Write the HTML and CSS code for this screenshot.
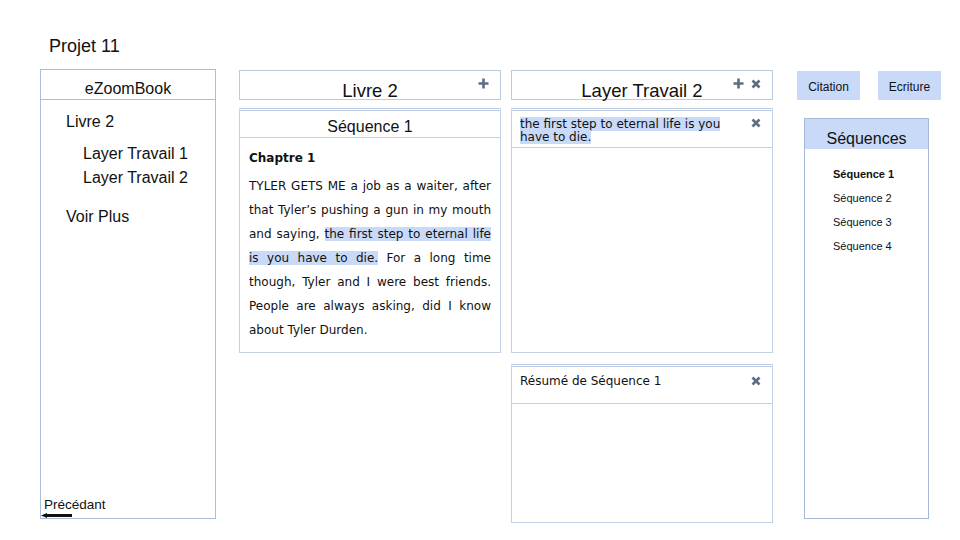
FILE: index.html
```html
<!DOCTYPE html>
<html lang="fr">
<head>
<meta charset="utf-8">
<title>Projet 11</title>
<link rel="stylesheet" href="styles.css">
</head>
<body>
<div class="page">
  <h1 class="title">Projet 11</h1>
  <div class="main">
    <aside class="nav">
      <div class="nav-head">eZoomBook</div>
      <ul class="nav-list">
        <li class="nav-book">Livre 2</li>
        <li class="nav-layer nav-layer-first">Layer Travail 1</li>
        <li class="nav-layer">Layer Travail 2</li>
        <li class="nav-more">Voir Plus</li>
      </ul>
      <div class="nav-foot">
        <span class="nav-back">Précédant</span>
        <svg class="back-arrow" width="31" height="5" viewBox="0 0 31 5"><polygon points="0,2.5 6,0 6,5" fill="#111"/><rect x="4" y="1" width="27" height="3" fill="#111"/></svg>
      </div>
    </aside>

    <section class="col col-book">
      <div class="bar">
        <span class="bar-title">Livre 2</span>
        <div class="bar-icons">
          <svg class="ico" width="11" height="11" viewBox="0 0 11 11"><path d="M5.5 0.5V10.5M0.5 5.5H10.5" stroke="#5d6d84" stroke-width="2.6"/></svg>
        </div>
      </div>
      <div class="card seq-card">
        <div class="card-head center">Séquence 1</div>
        <div class="seq-body">
          <div class="chapter">Chaptre 1</div>
          <p class="seq-text">TYLER GETS ME a job as a waiter, after that Tyler’s pushing a gun in my mouth and saying, <mark class="hl">the first step to eternal life</mark> <mark class="hl">is you have to die.</mark> For a long time though, Tyler and I were best friends. People are always asking, did I know about Tyler Durden.</p>
        </div>
      </div>
    </section>

    <section class="col col-layer">
      <div class="bar">
        <span class="bar-title">Layer Travail 2</span>
        <div class="bar-icons">
          <svg class="ico" width="11" height="11" viewBox="0 0 11 11"><path d="M5.5 0.5V10.5M0.5 5.5H10.5" stroke="#5d6d84" stroke-width="2.6"/></svg>
          <svg class="ico" width="10" height="10" viewBox="0 0 10 10"><path d="M1.5 1.5L8.5 8.5M8.5 1.5L1.5 8.5" stroke="#5d6d84" stroke-width="2.6"/></svg>
        </div>
      </div>
      <div class="card quote-card">
        <div class="quote-head">
          <p class="quote-text"><mark class="hl">the first step to eternal life is you have to die.</mark></p>
          <svg class="ico close" width="10" height="10" viewBox="0 0 10 10"><path d="M1.5 1.5L8.5 8.5M8.5 1.5L1.5 8.5" stroke="#5d6d84" stroke-width="2.6"/></svg>
        </div>
      </div>
      <div class="card resume-card">
        <div class="resume-head">
          <span class="resume-title">Résumé de Séquence 1</span>
          <svg class="ico close" width="10" height="10" viewBox="0 0 10 10"><path d="M1.5 1.5L8.5 8.5M8.5 1.5L1.5 8.5" stroke="#5d6d84" stroke-width="2.6"/></svg>
        </div>
      </div>
    </section>

    <section class="col col-side">
      <div class="tabs">
        <div class="tab">Citation</div>
        <div class="tab">Ecriture</div>
      </div>
      <div class="seq-list-panel">
        <div class="seq-list-head">Séquences</div>
        <ul class="seq-list">
          <li class="active">Séquence 1</li>
          <li>Séquence 2</li>
          <li>Séquence 3</li>
          <li>Séquence 4</li>
        </ul>
      </div>
    </section>
  </div>
</div>
</body>
</html>
```

FILE: styles.css
```css
* { box-sizing: border-box; }
html, body { margin: 0; padding: 0; background: #fff; }
body {
  font-family: "Liberation Sans", Arial, sans-serif;
  color: #111;
  width: 960px;
  height: 540px;
  overflow: hidden;
}
.page { padding-top: 36px; }
.title {
  margin: 0 0 13px 49px;
  font-size: 18px;
  line-height: 20px;
  font-weight: normal;
}
.main {
  display: flex;
  align-items: flex-start;
  padding-left: 40px;
}

/* left nav */
.nav {
  width: 176px;
  height: 450px;
  border: 1px solid #a9bedb;
  display: flex;
  flex-direction: column;
}
.nav-head {
  text-align: center;
  font-size: 16px;
  line-height: 18px;
  padding: 10px 0 1px;
  border-bottom: 1px solid #a9bedb;
}
.nav-list {
  list-style: none;
  margin: 0;
  padding: 13px 0 0 25px;
  font-size: 16px;
  line-height: 18px;
}
.nav-layer { padding-left: 17px; margin-top: 6px; }
.nav-layer-first { margin-top: 14px; }
.nav-more { margin-top: 21px; }
.nav-foot {
  margin-top: auto;
  display: flex;
  flex-direction: column;
  align-items: flex-start;
}
.nav-back {
  padding-left: 3px;
  font-size: 13.5px;
  line-height: 16px;
}
.back-arrow { display: block; margin-bottom: 0; }

/* columns */
.col { display: flex; flex-direction: column; }
.col-book { width: 262px; margin-left: 23px; margin-top: 1px; }
.col-layer { width: 262px; margin-left: 10px; margin-top: 1px; }
.col-side { width: 144px; margin-left: 24px; margin-top: 2px; }

.bar {
  position: relative;
  height: 30px;
  border: 1px solid #bccbe2;
  padding-top: 11px;
  text-align: center;
  font-size: 18.5px;
  line-height: 17px;
}
.bar-icons {
  position: absolute;
  right: 11px;
  top: 7px;
  display: flex;
  align-items: center;
  gap: 7px;
}
.ico { display: block; filter: blur(0.3px); }

.card {
  border: 1px solid #c4d1e5;
  border-top: 3px double #bccbe2;
  margin-top: 8px;
}
.card-head {
  font-size: 16px;
  line-height: 18px;
  padding: 7px 0 1px;
  border-bottom: 1px solid #c4d1e5;
}
.center { text-align: center; }
.seq-body {
  padding: 8px 9px 10px;
  font-family: "DejaVu Sans", Verdana, sans-serif;
  font-size: 12px;
}
.chapter { font-weight: bold; line-height: 24px; }
.seq-text {
  margin: 4px 0 0;
  line-height: 24px;
  text-align: justify;
}
.hl { background: #c9daf8; color: inherit; }

.quote-card { height: 245px; }
.quote-head,
.resume-head {
  display: flex;
  align-items: flex-start;
  justify-content: space-between;
  font-family: "DejaVu Sans", Verdana, sans-serif;
  font-size: 12px;
  border-bottom: 1px solid #c4d1e5;
  padding: 7px 11px 3px 8px;
}
.quote-text {
  margin: 0;
  width: 215px;
  line-height: 13px;
}
.quote-head .close { margin-top: 0; }
.resume-card { height: 159px; margin-top: 11px; }
.resume-head { padding: 6px 11px 14px 8px; }
.resume-title { line-height: 16px; }
.resume-head .close { margin-top: 3px; }

/* side */
.tabs {
  display: flex;
  justify-content: space-between;
}
.tab {
  width: 63px;
  height: 29px;
  background: #c9daf8;
  text-align: center;
  font-size: 12px;
  line-height: 14px;
  padding-top: 9px;
}
.seq-list-panel {
  margin: 18px 0 0 7px;
  width: 125px;
  height: 401px;
  border: 1px solid #a6b8d7;
}
.seq-list-head {
  background: #c9daf8;
  text-align: center;
  font-size: 16px;
  line-height: 18px;
  padding: 11px 0 1px;
}
.seq-list {
  list-style: none;
  margin: 0;
  padding: 13px 0 0 28px;
  font-size: 11px;
  line-height: 24px;
}
.seq-list .active { font-weight: bold; }
```
